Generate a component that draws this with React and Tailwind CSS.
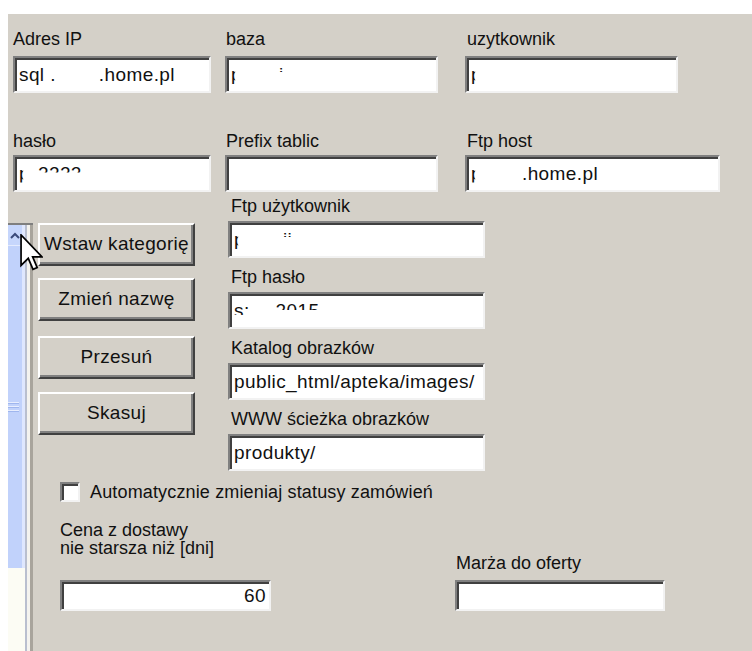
import React from "react";

const inputBase =
  "bg-white border-2 border-t-[#808080] border-l-[#808080] border-b-[#f2f2f2] border-r-[#f2f2f2] shadow-[inset_2px_2px_0_#404040] flex items-center pl-[4px] text-[19px] tracking-[0.4px] leading-[19px] whitespace-nowrap overflow-hidden";

function Stem() {
  return <span className="inline-block [clip-path:inset(0_62%_0_0)]">p</span>;
}

function Tops({ children, cls = "" }) {
  return <span className={`inline-block ${cls}`}>{children}</span>;
}

function Label({ children, cls = "" }) {
  return <div className={`h-[21px] leading-[21px] whitespace-nowrap ${cls}`}>{children}</div>;
}

function Input({ w, h = "h-[37px]", children, cls = "" }) {
  return <div className={`${inputBase} ${w} ${h} ${cls}`}>{children}</div>;
}

function Button({ children, cls = "" }) {
  return (
    <div className={`h-[43px] w-[157px] bg-[#d4d0c8] border-2 border-t-white border-l-white border-b-[#404040] border-r-[#404040] shadow-[inset_-2px_-2px_0_#808080] flex items-center justify-center whitespace-nowrap text-[19px] tracking-[0.3px] ${cls}`}>
      {children}
    </div>
  );
}

function Listbox() {
  return (
    <div className="w-[25px] mt-[31px] flex flex-col border-t-2 border-[#7f7f7f]">
      <div className="flex flex-1">
        <div className="w-[17px] flex flex-col bg-[#fcfcf4]">
          <div className="h-[20px] bg-[#c6d6fc] border-r-[3px] border-[#e0e8fe] flex items-center justify-center">
            <svg width="10" height="7" viewBox="0 0 10 7">
              <path d="M1 6 L5 2 L9 6" fill="none" stroke="#3a4a7a" strokeWidth="2" />
            </svg>
          </div>
          <div className="h-[323px] bg-[#c1d2fb] border-r-[3px] border-[#dfe7fe] border-t border-t-[#e4ebfe] flex flex-col justify-center gap-[2px] pr-[3px]">
            <div className="h-[2px] bg-[#e8eefe] border-b border-[#9fb6ee]" />
            <div className="h-[2px] bg-[#e8eefe] border-b border-[#9fb6ee]" />
            <div className="h-[2px] bg-[#e8eefe] border-b border-[#9fb6ee]" />
          </div>
        </div>
        <div className="w-[2px] bg-[#b9bfcf]" />
        <div className="w-[3px] bg-[#f4f3ef]" />
        <div className="w-[3px] bg-[#a8a49c]" />
      </div>
    </div>
  );
}

export default function App() {
  return (
    <div className="w-[752px] h-[651px] bg-white overflow-hidden font-['Liberation_Sans',Arial,sans-serif] text-[18px] text-[#111]">
      <div className="ml-[8px] mt-[14px] h-[637px] bg-[#d4d0c8] relative flex flex-col">
        {/* top two rows */}
        <div className="h-[178px] pl-[5px] pt-[15px] grid grid-cols-[212px_240px_263px] grid-rows-[auto_auto]">
          <div>
            <Label>Adres IP</Label>
            <Input w="w-[198px]" cls="mt-[6px]">
              <span>sql .</span>
              <span className="ml-[43px]">.home.pl</span>
            </Input>
          </div>
          <div>
            <Label cls="pl-[1px]">baza</Label>
            <Input w="w-[213px]" cls="mt-[6px]">
              <Stem />
              <Tops cls="ml-[37px] [clip-path:inset(0_0_12px_0)]">i</Tops>
            </Input>
          </div>
          <div>
            <Label cls="pl-[2px]">uzytkownik</Label>
            <Input w="w-[213px]" cls="mt-[6px]">
              <Stem />
            </Input>
          </div>

          <div className="mt-[37px]">
            <Label>hasło</Label>
            <Input w="w-[198px]" cls="mt-[3px]">
              <Stem />
              <Tops cls="ml-[8px] [clip-path:inset(0_0_10px_0)]">2222</Tops>
            </Input>
          </div>
          <div className="mt-[37px]">
            <Label cls="pl-[1px]">Prefix tablic</Label>
            <Input w="w-[213px]" cls="mt-[3px]" />
          </div>
          <div className="mt-[37px]">
            <Label cls="pl-[2px]">Ftp host</Label>
            <Input w="w-[255px]" cls="mt-[3px]">
              <Stem />
              <span className="ml-[40px]">.home.pl</span>
            </Input>
          </div>
        </div>

        {/* middle + bottom */}
        <div className="flex flex-1">
          <Listbox />
          <div className="flex flex-col">
            <div className="flex">
              <div className="ml-[5px] mt-[31px] flex flex-col">
                <Button>Wstaw kategorię</Button>
                <Button cls="mt-[12px]">Zmień nazwę</Button>
                <Button cls="mt-[15px]">Przesuń</Button>
                <Button cls="mt-[13px]">Skasuj</Button>
              </div>
              <div className="ml-[33px] mt-[4px] flex flex-col gap-[9px]">
                <div>
                  <Label cls="pl-[3px]">Ftp użytkownik</Label>
                  <Input w="w-[257px]" cls="mt-[4px]">
                    <Stem />
                    <Tops cls="ml-[38px] [clip-path:inset(0_0_12px_0)]">ii</Tops>
                  </Input>
                </div>
                <div>
                  <Label cls="pl-[3px]">Ftp hasło</Label>
                  <Input w="w-[257px]" cls="mt-[4px]">
                    <Tops cls="[clip-path:inset(2px_0_5px_0)]">s:</Tops>
                    <Tops cls="ml-[26px] [clip-path:inset(0_0_10px_0)]">2015</Tops>
                  </Input>
                </div>
                <div>
                  <Label cls="pl-[3px]">Katalog obrazków</Label>
                  <Input w="w-[257px]" cls="mt-[4px]">
                    public_html/apteka/images/
                  </Input>
                </div>
                <div>
                  <Label cls="pl-[3px]">WWW ścieżka obrazków</Label>
                  <Input w="w-[257px]" cls="mt-[4px]">
                    produkty/
                  </Input>
                </div>
              </div>
            </div>

            <div className="ml-[27px] mt-[11px] flex items-center gap-[10px]">
              <div className="w-[20px] h-[20px] bg-white border-2 border-t-[#808080] border-l-[#808080] border-b-[#f2f2f2] border-r-[#f2f2f2] shadow-[inset_2px_2px_0_#404040]" />
              <span className="leading-[20px] whitespace-nowrap tracking-[0.15px]">Automatycznie zmieniaj statusy zamówień</span>
            </div>

            <div className="ml-[27px] mt-[19px] flex items-end">
              <div>
                <div className="leading-[18px] whitespace-nowrap">
                  Cena z dostawy
                  <br />
                  nie starsza niż [dni]
                </div>
                <Input w="w-[211px]" h="h-[31px]" cls="mt-[23px] justify-end pr-[3px]">
                  60
                </Input>
              </div>
              <div className="ml-[184px]">
                <div className="leading-[18px] whitespace-nowrap pl-[1px]">Marża do oferty</div>
                <Input w="w-[210px]" h="h-[31px]" cls="mt-[8px]" />
              </div>
            </div>
          </div>
        </div>

        {/* mouse cursor overlay */}
        <svg
          className="absolute left-[12px] top-[220px]"
          width="23"
          height="38"
          viewBox="0 0 12 20"
        >
          <path
            d="M0.5 0.5 L0.5 16.5 L4.3 12.8 L6.8 18.6 L9 17.7 L6.6 12 L11.5 12 Z"
            fill="white"
            stroke="black"
            strokeWidth="0.9"
            strokeLinejoin="miter"
          />
        </svg>
      </div>
    </div>
  );
}
